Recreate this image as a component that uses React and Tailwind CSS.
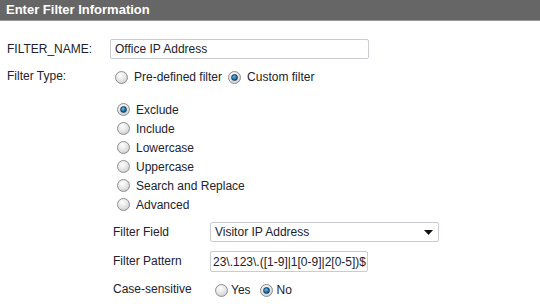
const Radio = ({ checked }) => (
  <span className="relative inline-block h-[13px] w-[13px] shrink-0 rounded-full border border-[#8e8e8e] bg-[radial-gradient(circle_at_40%_30%,#ffffff,#e2e2e2_55%,#bdbdbd)]">
    {checked && (
      <span className="absolute left-[2px] top-[2px] h-[7px] w-[7px] rounded-full border border-[#1a3f5e] bg-[radial-gradient(circle_at_40%_35%,#6cc0f0,#1565a0_60%,#0d3f66)]" />
    )}
  </span>
);

const Option = ({ checked, label, className = '' }) => (
  <label className={`flex items-center ${className}`}>
    <Radio checked={checked} />
    <span className="ml-[6px]">{label}</span>
  </label>
);

export default function App() {
  const filterTypes = ['Exclude', 'Include', 'Lowercase', 'Uppercase', 'Search and Replace', 'Advanced'];

  return (
    <div className="h-[304px] w-[540px] overflow-hidden bg-white text-[12px] text-[#22222c] font-['Liberation_Sans',Arial,sans-serif]">
      <div className="flex h-[21px] items-center border-b border-[#9a9a9a] bg-[#666666] pl-[6px] text-[13px] font-bold text-white">
        Enter Filter Information
      </div>

      <div className="pl-[7px]">
        <div className="mt-[18px] flex h-[20px] items-center">
          <div className="w-[103px]">FILTER_NAME:</div>
          <div className="flex h-[20px] w-[259px] items-center rounded-[2px] border border-[#c9ccd2] pl-[4px]">
            Office IP Address
          </div>
        </div>

        <div className="mt-[9px] flex h-[18px] items-center">
          <div className="w-[108px] -mt-[2px]">Filter Type:</div>
          <Option checked={false} label="Pre-defined filter" />
          <Option checked label="Custom filter" className="ml-[6px]" />
        </div>

        <div className="mt-[14px] flex flex-col pl-[110px]">
          {filterTypes.map((t, i) => (
            <Option key={t} checked={i === 0} label={t} className="h-[19px]" />
          ))}
        </div>

        <div className="mt-[8px] flex flex-col pl-[106px]">
          <div className="flex h-[20px] items-center">
            <div className="w-[97px]">Filter Field</div>
            <div className="flex h-[20px] w-[229px] items-center justify-between rounded-[2px] border border-[#c9ccd2] pl-[4px] pr-[5px]">
              <span>Visitor IP Address</span>
              <svg width="9" height="5" viewBox="0 0 9 5">
                <path d="M0 0h9L4.5 5z" fill="#111" />
              </svg>
            </div>
          </div>

          <div className="mt-[9px] flex h-[21px] items-center">
            <div className="w-[97px] -mt-[2px]">Filter Pattern</div>
            <div className="flex h-[21px] w-[158px] items-center overflow-hidden whitespace-nowrap rounded-[2px] border border-[#c9ccd2] pl-[2px]">
              23\.123\.([1-9]|1[0-9]|2[0-5])$
            </div>
          </div>

          <div className="mt-[8px] flex h-[20px] items-center">
            <div className="w-[102px] -mt-[3px]">Case-sensitive</div>
            <Option checked={false} label="Yes" className="[&>span:last-child]:ml-[3px]" />
            <Option checked label="No" className="ml-[9px] [&>span:last-child]:ml-[4px]" />
          </div>
        </div>
      </div>
    </div>
  );
}
